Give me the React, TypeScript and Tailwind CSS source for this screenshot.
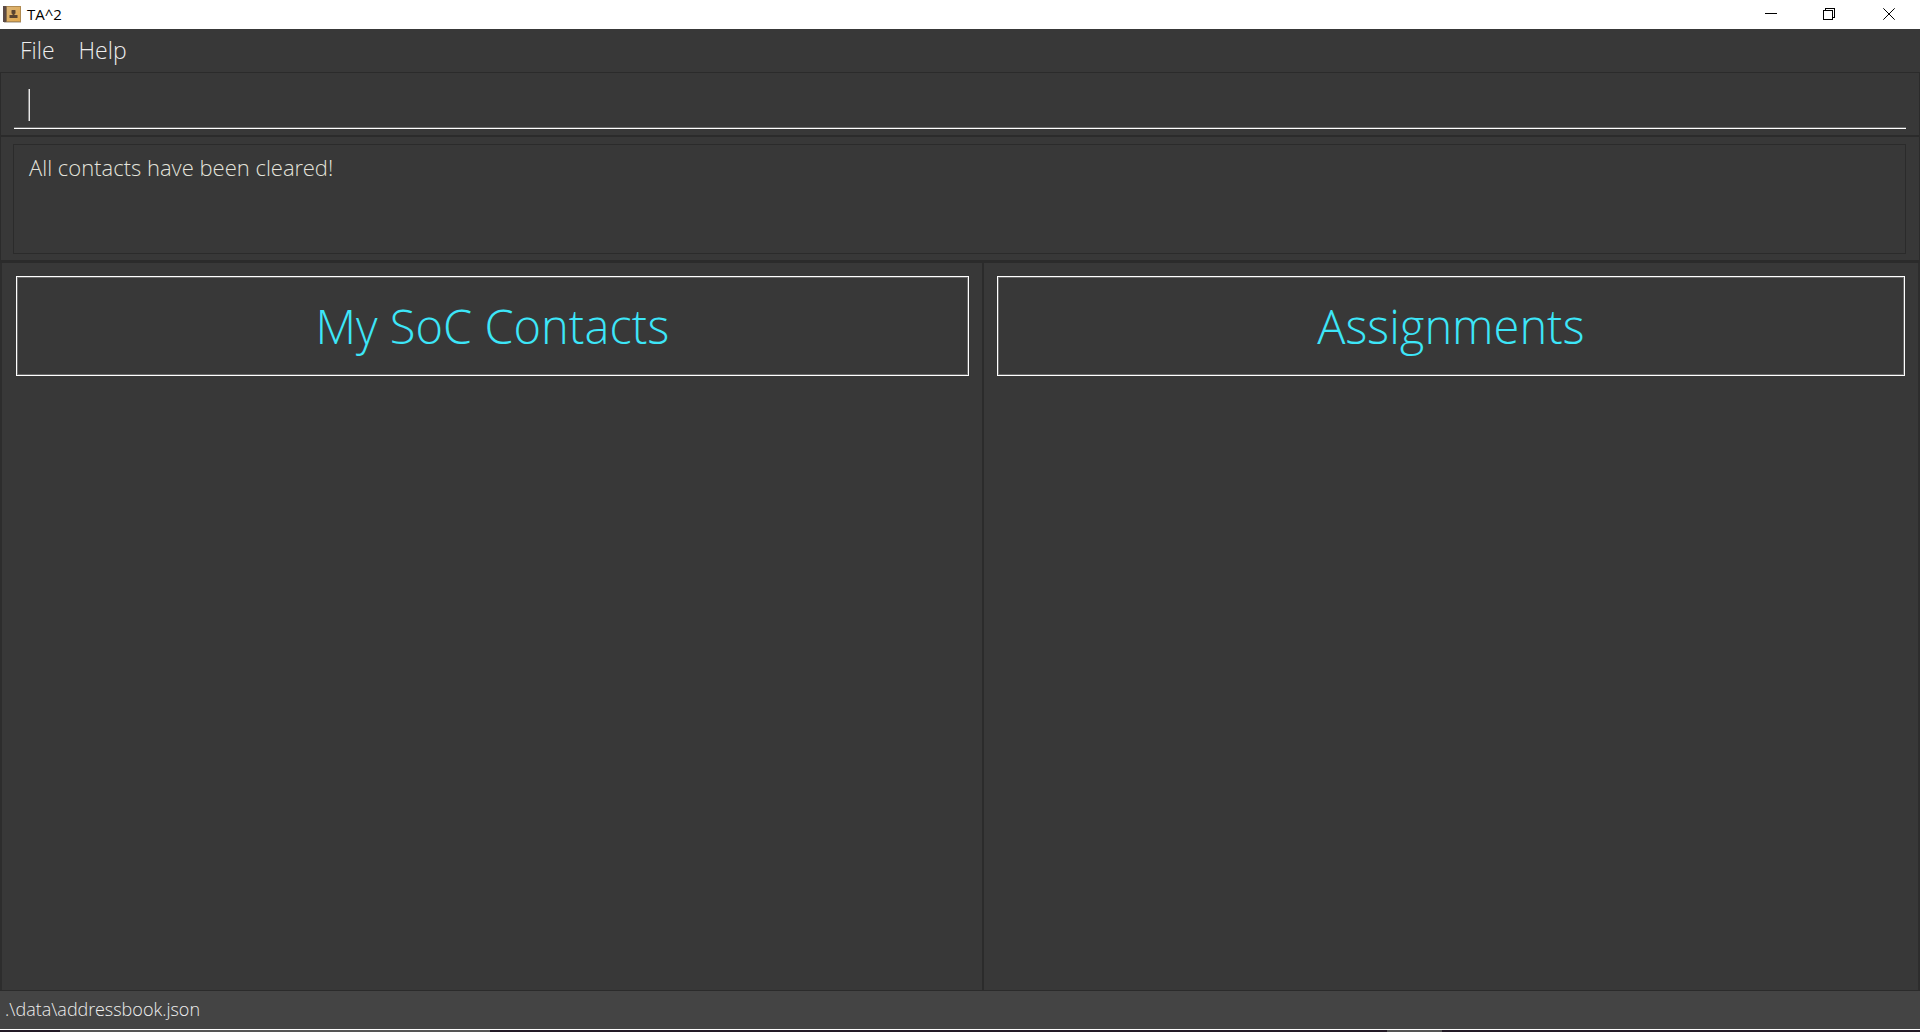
import React from "react";

function AppIcon() {
  return (
    <svg width="18" height="17" viewBox="0 0 18 17" aria-hidden="true">
      <defs>
        <linearGradient id="cover" x1="0" y1="0" x2="1" y2="1">
          <stop offset="0" stopColor="#d9b377" />
          <stop offset="1" stopColor="#e3a94c" />
        </linearGradient>
      </defs>
      <rect x="0" y="0" width="18" height="16" fill="#b08a50" />
      <rect x="4" y="1" width="13" height="14" fill="url(#cover)" />
      <rect x="0" y="0" width="3" height="16" fill="#5b4a45" />
      <rect x="3" y="0" width="1" height="16" fill="#8d7048" />
      <rect x="1" y="16" width="17" height="1" fill="#c9c4bc" />
      <path d="M8.5 4.500q0-.5.5-.5h3q.5 0 .5.5v3L11.500 8v1h3v3h-8V9h3V8l-1-.5z" fill="#5a4430" />
    </svg>
  );
}

function TitleBar() {
  return (
    <header className="flex h-[29px] items-center justify-between bg-white pb-px text-black">
      <div className="flex items-center gap-1.5 pl-[3px]">
        <AppIcon />
        <span className="font-['Open_Sans','Noto_Sans',sans-serif] text-[15px] leading-5 font-normal">TA^2</span>
      </div>
      <div className="flex h-full">
        <button aria-label="Minimize" className="flex w-[58px] items-center justify-center">
          <svg width="12" height="12" viewBox="0 0 12 12" shapeRendering="crispEdges">
            <path d="M0 5.5h12" stroke="#000" />
          </svg>
        </button>
        <button aria-label="Restore" className="flex w-[58px] items-center justify-center">
          <svg width="12" height="12" viewBox="0 0 12 12" fill="none" stroke="#000" shapeRendering="crispEdges">
            <path d="M.5 2.5h9v9h-9zM2.5 2.5v-2h9v9h-2" />
          </svg>
        </button>
        <button aria-label="Close" className="flex w-[62px] items-center justify-center">
          <svg width="12" height="12" viewBox="0 0 12 12" stroke="#000">
            <path d="M.3.3l11.4 11.4M11.7.3L.3 11.7" />
          </svg>
        </button>
      </div>
    </header>
  );
}

function Panel({ title, className }: { title: string; className: string }) {
  return (
    <section className={className}>
      <div className="border border-white">
        <h2 className="border border-[#6a6a6a] py-4 text-center text-[47px] leading-[64px] text-[#3de6f8]">
          {title}
        </h2>
      </div>
    </section>
  );
}

export default function App() {
  return (
    <div className="flex min-h-screen flex-col bg-[#383838] font-['Open_Sans_Light','Open_Sans','Noto_Sans',sans-serif] font-light">
      <TitleBar />
      <nav className="flex h-[43px] items-center gap-6 px-5 pb-0.5 text-[23px] leading-8 text-[#eeeeee]">
        <button>File</button>
        <button>Help</button>
      </nav>

      <div className="border border-b-2 border-[#2b2b2b] px-[13px] pb-[6px]">
        <div className="relative border-b border-white">
          <input
            aria-label="Command"
            className="block h-[55px] w-full border-b border-[#6a6a6a] bg-transparent px-4 text-2xl text-white caret-transparent outline-none"
          />
          <span className="absolute top-4 left-[14px] h-8 w-0.5 border-r border-[#e8e8e8] bg-[#8a8a8a]" />
        </div>
      </div>

      <div className="border-x border-b-3 border-[#2b2b2b] pt-[7px] pr-[13px] pb-[6px] pl-3">
        <output className="block h-[110px] border border-[#2b2b2b] px-[15px] pt-[7px] text-[22px] leading-[30px] text-[#e4e4dc]">
          All contacts have been cleared!
        </output>
      </div>

      <main className="grid grow grid-cols-[983fr_935fr] border-x-2 border-[#2d2d2d]">
        <Panel title="My SoC Contacts" className="border-r-2 border-[#2b2b2b] pt-[13px] pr-[13px] pl-[14px]" />
        <Panel title="Assignments" className="px-[13px] pt-[13px]" />
      </main>

      <footer>
        <div className="border-t border-b border-t-[#2b2b2b] border-b-white bg-[#444444] px-[5px] pt-1.5 pb-[7px] text-lg leading-[25px] text-[#eeeeee]">
          .\data\addressbook.json
        </div>
        <div className="flex h-0.5 bg-[#231a26]">
          <span className="w-[3.125%]" />
          <span className="w-[22.4%] bg-[#555555]" />
          <span className="w-[46.7%]" />
          <span className="w-[2.9%] bg-[#555555]" />
        </div>
      </footer>
    </div>
  );
}
